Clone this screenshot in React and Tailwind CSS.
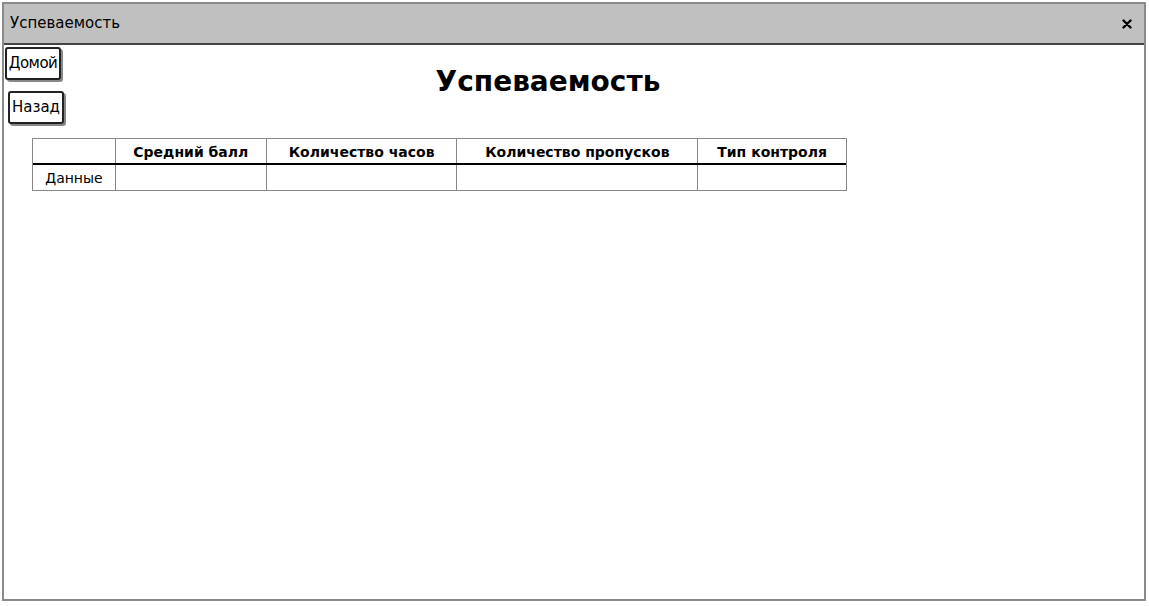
export default function App() {
  const cols = [
    { w: "w-[83px]", h: "" },
    { w: "w-[151px]", h: "Средний балл" },
    { w: "w-[191px]", h: "Количество часов" },
    { w: "w-[241px]", h: "Количество пропусков" },
    { w: "w-[148px]", h: "Тип контроля" },
  ];
  return (
    <div className="w-[1149px] h-[606px] bg-white pl-[2px] pt-[2px]" style={{ fontFamily: '"DejaVu Sans", "Noto Sans", sans-serif' }}>
      <div className="w-[1144px] h-[599px] border-2 border-[#8a8a8a] flex flex-col bg-white">
        <div className="h-[41px] bg-[#c0c0c0] border-b-2 border-[#444] flex items-center justify-between pl-[6px] pr-[12px] text-[15px] text-black shrink-0">
          <span>Успеваемость</span>
          <svg width="10" height="10" viewBox="0 0 10 10"><path d="M1.5 1.5 L8.5 8.5 M8.5 1.5 L1.5 8.5" stroke="#000" strokeWidth="2.4" strokeLinecap="round" /></svg>
        </div>
        <div className="relative flex-1">
          <div className="flex flex-col items-start gap-[11px] pt-[2px] pl-[1px]">
            <button className="h-[33px] w-[56px] border-2 border-[#222] rounded-[3px] bg-white text-[15px] text-black shadow-[2px_2px_0_#888] flex items-center justify-center tracking-[-0.5px]">Домой</button>
            <button className="ml-[3px] h-[33px] w-[56px] border-2 border-[#222] rounded-[3px] bg-white text-[15px] text-black shadow-[2px_2px_0_#888] flex items-center justify-center">Назад</button>
          </div>
          <h1 className="absolute left-0 right-0 top-[16px] text-center text-[28px] font-bold text-black">
            <span className="inline-block ml-[-52px]">Успеваемость</span>
          </h1>
          <div className="ml-[28px] mt-[14px] w-[815px] border border-[#888] text-[14px] text-black">
            <div className="flex h-[26px] border-b-2 border-black">
              {cols.map((c, i) => (
                <div key={i} className={`${c.w} ${i < 4 ? "border-r border-[#888]" : ""} flex items-center justify-center font-bold pt-[2px]`}>{c.h}</div>
              ))}
            </div>
            <div className="flex h-[25px]">
              {cols.map((c, i) => (
                <div key={i} className={`${c.w} ${i < 4 ? "border-r border-[#888]" : ""} flex items-center justify-center pt-[2px]`}>{i === 0 ? "Данные" : ""}</div>
              ))}
            </div>
          </div>
        </div>
      </div>
    </div>
  );
}
